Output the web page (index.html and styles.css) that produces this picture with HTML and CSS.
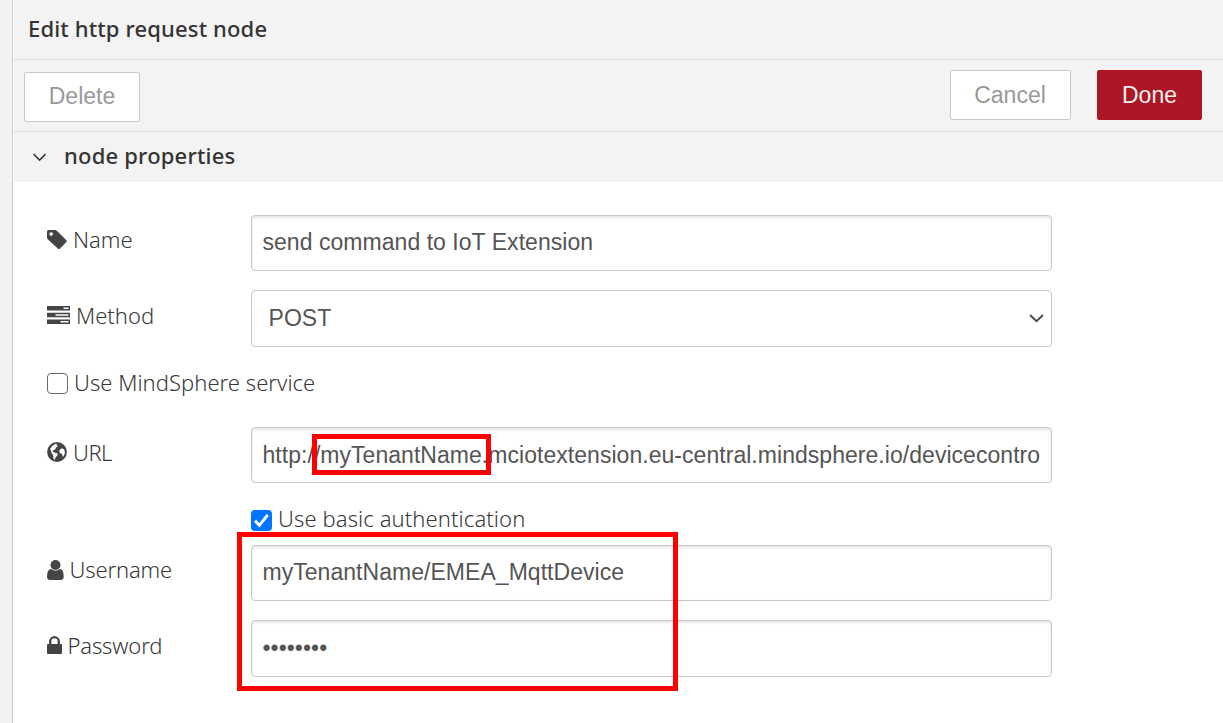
FILE: index.html
```html
<!DOCTYPE html>
<html lang="en">
<head>
<meta charset="utf-8">
<title>Edit http request node</title>
<link rel="stylesheet" href="styles.css">
</head>
<body>
<div class="gutter"></div>
<main class="tray">
  <header class="tray-header"><span class="t-title">Edit http request node</span></header>
  <div class="toolbar">
    <button class="btn btn-delete"><span class="t-delete">Delete</span></button>
    <button class="btn btn-cancel"><span class="t-cancel">Cancel</span></button>
    <button class="btn btn-done"><span class="t-done">Done</span></button>
  </div>
  <div class="section-header">
    <svg class="chevron" width="14" height="9" viewBox="0 0 14 9"><path d="M.6 1l6 6 6-6" fill="none" stroke="#333" stroke-width="1.600"/></svg>
    <span class="t-section">node properties</span>
  </div>
  <form class="form">
    <div class="row row-name">
      <label class="label">
        <svg class="icon" width="20" height="20" viewBox="0 0 20 20"><path fill="#444" fill-rule="evenodd" d="M1.500 0H8.200Q9 0 9.800.700L19.400 10.300Q20.200 11.200 19.400 12.100L12.900 18.800Q12 19.700 11.100 18.800L1 9.400Q0 8.500 0 7.500V1.500Q0 0 1.500 0ZM4.200 2.300a1.800 1.800 0 1 0 0 3.600a1.800 1.800 0 1 0 0-3.600Z"/></svg>
        <span class="t-name">Name</span>
      </label>
      <div class="field"><span class="t-vname">send command to IoT Extension</span></div>
    </div>
    <div class="row row-method">
      <label class="label">
        <svg class="icon" width="23" height="18" viewBox="0 0 23 18"><path fill="#444" fill-rule="evenodd" d="M0 0H23V4.500H0ZM16.500 1.500V3H21.500V1.500ZM0 6.700H23V11.200H0ZM8.500 8.200V9.700H21.500V8.200ZM0 13.400H23V18H0ZM13.500 14.900V16.400H21.500V14.900Z"/></svg>
        <span class="t-method">Method</span>
      </label>
      <div class="field select"><span class="t-post">POST</span>
        <svg width="15" height="9" viewBox="0 0 15 9"><path d="M1 1l6.500 6.200L14 1" fill="none" stroke="#484848" stroke-width="1.900"/></svg>
      </div>
    </div>
    <label class="check-row check-service"><span class="box"></span><span class="t-service">Use MindSphere service</span></label>
    <div class="row row-url">
      <label class="label">
        <svg class="icon" width="20" height="20" viewBox="0 0 20 20"><circle cx="10" cy="10" r="9.900" fill="#444"/><path fill="#fff" d="M8.200 2L10 1.700L9.400 3L11 4.100L9.300 5.300L8.500 7L6.500 8.300L5.500 9.600L7.400 10.500L10.300 11.300L10.600 13.200L8.600 15.200L7.800 17.800L6.500 17L6.200 13.300L4.700 11.200L4 9L3 7Q4.500 3.600 8.200 2ZM13.200 7.200L15.200 6.200L17.200 7.400L18 10.500L17 13.600L15.800 15L15 12L12.800 11L12.200 9Z"/></svg>
        <span class="t-url">URL</span>
      </label>
      <div class="field"><span class="t-vurl">http://myTenantName.mciotextension.eu-central.mindsphere.io/devicecontro</span></div>
    </div>
    <label class="check-row check-auth"><span class="box checked"><svg width="21" height="21" viewBox="0 0 21 21"><path d="M4 10.800l4.300 4.500L16.700 5" fill="none" stroke="#fff" stroke-width="2.900"/></svg></span><span class="t-auth">Use basic authentication</span></label>
    <div class="row row-user">
      <label class="label">
        <svg class="icon" width="17" height="20" viewBox="0 0 17 20"><circle cx="8.500" cy="5" r="5" fill="#444"/><path fill="#444" d="M4.200 9Q8.500 12.600 12.800 9Q16.700 9.300 16.700 16.500Q16.700 20 13.500 20H3.300Q0 20 0 16.500Q0 9.300 4.200 9Z"/></svg>
        <span class="t-user">Username</span>
      </label>
      <div class="field"><span class="t-vuser">myTenantName/EMEA_MqttDevice</span></div>
    </div>
    <div class="row row-pass">
      <label class="label">
        <svg class="icon" width="15" height="18" viewBox="0 0 15 18"><path d="M3.200 9V5.500a4.300 4.300 0 0 1 8.600 0V9" fill="none" stroke="#444" stroke-width="2.300"/><rect y="8" width="15" height="10" rx="1" fill="#444"/></svg>
        <span class="t-pass">Password</span>
      </label>
      <div class="field"><span class="t-vpass">••••••••</span></div>
    </div>
  </form>
</main>
<div class="mark mark-tenant"></div>
<div class="mark mark-credentials"></div>
</body>
</html>
```

FILE: styles.css
```css
* { box-sizing: border-box; }
body {
  margin: 0; width: 1223px; height: 723px; overflow: hidden; display: flex;
  position: relative; background: #fff; color: #383838;
  font: 300 22px/30px "Noto Sans", sans-serif;
}
.gutter { width: 13px; background: #f2f2f2; border-right: 1px solid #ccc; }
.tray { flex: 1; margin-left: 1px; }
span { white-space: nowrap; }
.tray-header { height: 60px; padding: 13px 0 0 14px; background: #f3f3f3; border-bottom: 1px solid #d9d9d9; }
.t-title, .t-section { font-weight: 500; color: #333; letter-spacing: .15px; }
.t-section { letter-spacing: .2px; }
.toolbar { height: 72px; display: flex; align-items: flex-start; padding: 10px 21px 0 10px; background: #f3f3f3; border-bottom: 1px solid #d9d9d9; }
.btn { height: 50px; padding: 0; border: 1px solid #c9c9c9; border-radius: 2px; background: #fff; color: #999; font: 23px/48px "Liberation Sans", Arial, sans-serif; }
.btn-delete { width: 116px; margin-top: 2px; padding-bottom: 2px; line-height: 46px; }
.btn-cancel { width: 121px; margin-left: auto; padding-right: 1px; }
.btn-done { width: 105px; margin-left: 26px; background: #ad1625; border-color: #ad1625; color: #eee; }
.section-header { height: 50px; display: flex; padding: 8px 0 0 19px; background: #f3f3f3; }
.chevron { margin: 13px 17px 0 0; }
.form { padding: 33px 0 0 33px; }
.row { display: flex; width: 1005px; height: 56px; }
.label { width: 204px; display: flex; align-items: center; height: 50px; }
.icon { margin-right: 6px; flex: none; }
.t-name, .t-user { padding-bottom: 2px; }
.t-user, .t-pass { letter-spacing: -.15px; }
.t-url { letter-spacing: -.5px; }
.icon + .t-user, .icon + .t-pass { margin-left: -.5px; }
.field { flex: 1; min-width: 0; border: 1px solid #c8c8c8; border-radius: 4px; padding: 0 10.500px; color: #555; font: 23px/52px "Liberation Sans", Arial, sans-serif; letter-spacing: .04px; box-shadow: inset 0 2px 3px rgba(0,0,0,.1); }
.row-method { margin-top: 19px; height: 57px; }
.select { display: flex; align-items: center; justify-content: space-between; padding: 0 7px 0 16.500px; box-shadow: none; }
.t-post { padding-bottom: 2px; }
.check-row { display: flex; align-items: center; height: 30px; }
.check-service { margin-top: 21px; }
.t-service { padding-bottom: 3px; letter-spacing: .04px; }
.t-auth { padding-bottom: 4px; letter-spacing: .1px; }
.box { width: 21px; height: 21px; margin-right: 6px; border: 1px solid #6b6b6b; border-radius: 4px; }
.checked { border: 0; background: #0075ff; }
.checked svg { display: block; }
.row-url { margin-top: 29px; }
.row-url .field, .row-pass .field { line-height: 54px; }
.check-auth { margin: 22px 0 0 204px; }
.row-user { margin-top: 10px; }
.row-pass { margin-top: 19px; height: 57px; }
.mark { position: absolute; border: 5px solid #f00; }
.mark-tenant { left: 312px; top: 434px; width: 179px; height: 41px; }
.mark-credentials { left: 237px; top: 532px; width: 441px; height: 159px; }
```
